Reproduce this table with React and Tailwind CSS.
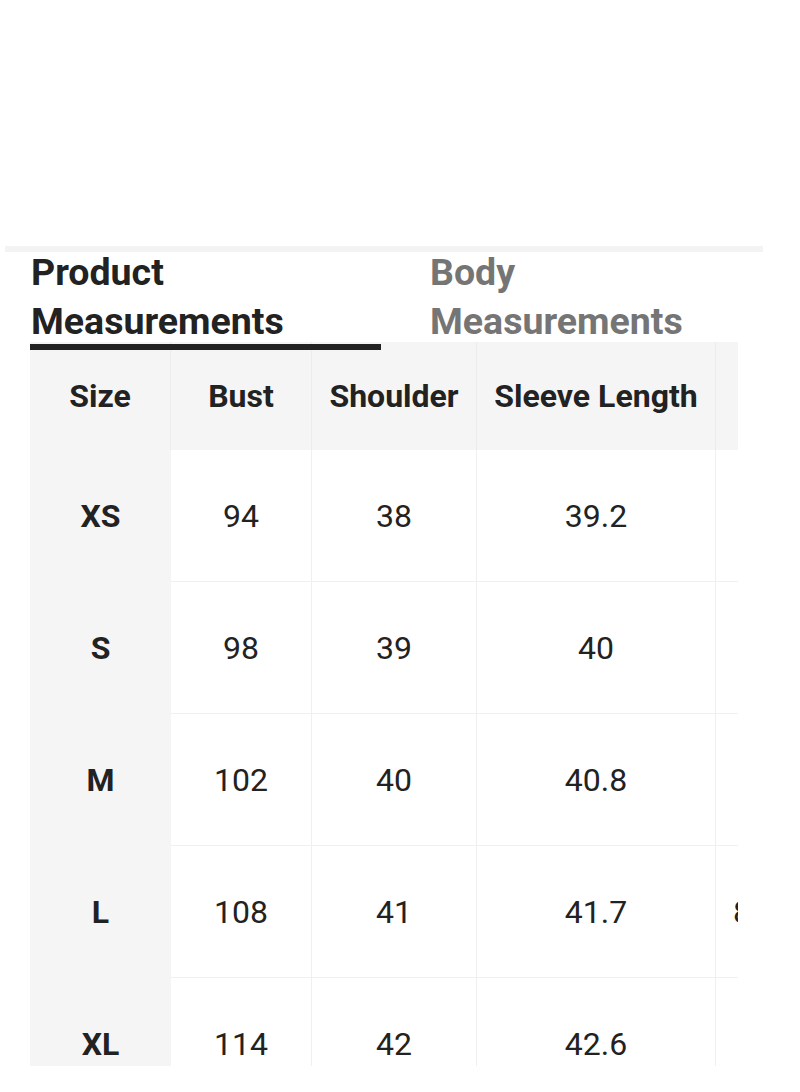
const cols = [
  { key: 'size', label: 'Size', w: 'w-[141px]' },
  { key: 'bust', label: 'Bust', w: 'w-[141px]' },
  { key: 'shoulder', label: 'Shoulder', w: 'w-[165px]' },
  { key: 'sleeve', label: 'Sleeve Length', w: 'w-[239px]' },
]

const rows = [
  { size: 'XS', bust: '94', shoulder: '38', sleeve: '39.2', extra: '' },
  { size: 'S', bust: '98', shoulder: '39', sleeve: '40', extra: '' },
  { size: 'M', bust: '102', shoulder: '40', sleeve: '40.8', extra: '' },
  { size: 'L', bust: '108', shoulder: '41', sleeve: '41.7', extra: '84' },
  { size: 'XL', bust: '114', shoulder: '42', sleeve: '42.6', extra: '' },
]

export default function App() {
  return (
    <div className="w-[800px] h-[1092px] bg-white overflow-hidden text-[#222]" style={{ fontFamily: 'Roboto, "Noto Sans", sans-serif' }}>
      <div className="h-[246px]" />
      <div className="ml-[5px] w-[758px] h-[6px] bg-[#f3f3f3]" />

      {/* tabs */}
      <div className="flex pl-[31px] -mt-[4px] text-[37.5px] font-bold leading-[49px]">
        <div className="w-[399px]">
          <div>Product</div>
          <div>Measurements</div>
        </div>
        <div className="text-[#757575]">
          <div>Body</div>
          <div>Measurements</div>
        </div>
      </div>
      <div className="relative z-10 ml-[30px] -mt-[2px] w-[351px] h-[6px] bg-[#222]" />

      {/* table */}
      <div className="-mt-[8px] ml-[30px] w-[708px] h-[724px] overflow-hidden">
        <div className="flex w-[800px] h-[108px] bg-[#f5f5f5] text-[32px] font-bold">
          {cols.map(c => (
            <div key={c.key} className={`${c.w} shrink-0 flex items-center justify-center border-r border-[#ececec] whitespace-nowrap`}>
              {c.label}
            </div>
          ))}
          <div className="flex-1" />
        </div>
        {rows.map((r, i) => (
          <div key={r.size} className="flex w-[800px] h-[132px] text-[32px]">
            <div className="w-[141px] shrink-0 flex items-center justify-center bg-[#f5f5f5] font-bold">{r.size}</div>
            <div className={`w-[141px] shrink-0 flex items-center justify-center border-r border-[#f0f0f0] ${i < rows.length - 1 ? 'border-b' : ''}`}>{r.bust}</div>
            <div className={`w-[165px] shrink-0 flex items-center justify-center border-r border-[#f0f0f0] ${i < rows.length - 1 ? 'border-b' : ''}`}>{r.shoulder}</div>
            <div className={`w-[239px] shrink-0 flex items-center justify-center border-r border-[#f0f0f0] ${i < rows.length - 1 ? 'border-b' : ''}`}>{r.sleeve}</div>
            <div className={`flex-1 flex items-center pl-[17px] border-[#f0f0f0] ${i < rows.length - 1 ? 'border-b' : ''}`}>{r.extra}</div>
          </div>
        ))}
      </div>
    </div>
  )
}
